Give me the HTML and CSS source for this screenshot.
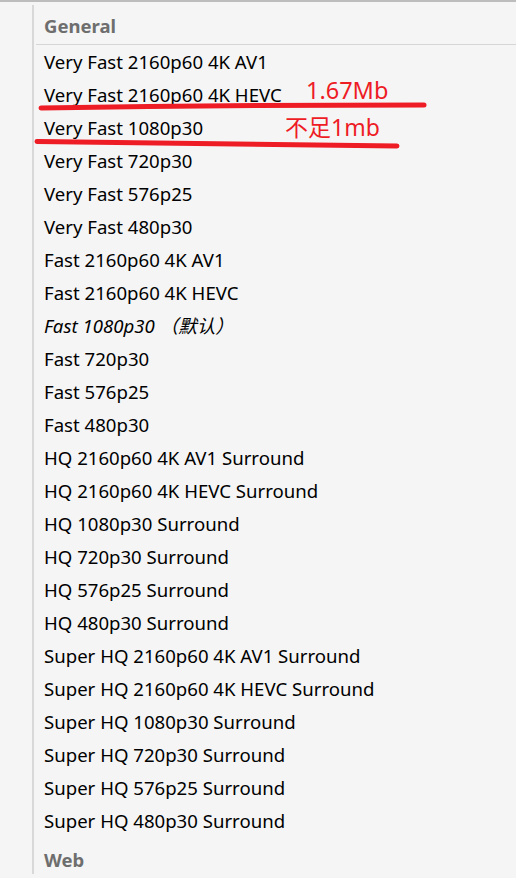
FILE: index.html
```html
<!DOCTYPE html>
<html lang="zh-CN">
<head>
<meta charset="utf-8">
<title>Presets</title>
<link rel="stylesheet" href="styles.css">
</head>
<body>
<div class="topbar"></div>
<div class="frame">
  <div class="gutter"></div>
  <div class="panel">
    <div class="group-head">General</div>
    <ul class="list">
      <li>Very Fast 2160p60 4K AV1</li>
      <li>Very Fast 2160p60 4K HEVC</li>
      <li>Very Fast 1080p30</li>
      <li>Very Fast 720p30</li>
      <li>Very Fast 576p25</li>
      <li>Very Fast 480p30</li>
      <li>Fast 2160p60 4K AV1</li>
      <li>Fast 2160p60 4K HEVC</li>
      <li class="default">Fast 1080p30 （默认）</li>
      <li>Fast 720p30</li>
      <li>Fast 576p25</li>
      <li>Fast 480p30</li>
      <li>HQ 2160p60 4K AV1 Surround</li>
      <li>HQ 2160p60 4K HEVC Surround</li>
      <li>HQ 1080p30 Surround</li>
      <li>HQ 720p30 Surround</li>
      <li>HQ 576p25 Surround</li>
      <li>HQ 480p30 Surround</li>
      <li>Super HQ 2160p60 4K AV1 Surround</li>
      <li>Super HQ 2160p60 4K HEVC Surround</li>
      <li>Super HQ 1080p30 Surround</li>
      <li>Super HQ 720p30 Surround</li>
      <li>Super HQ 576p25 Surround</li>
      <li>Super HQ 480p30 Surround</li>
    </ul>
    <div class="group-head web">Web</div>
  </div>
</div>
<svg class="marks" width="516" height="878" viewBox="0 0 516 878" aria-hidden="true">
  <path d="M41 108 Q 230 105 424 105" />
  <path d="M37 141.5 Q 220 143 397 146" />
</svg>
<span class="note note-a">1.67Mb</span>
<span class="note note-b">不足1mb</span>
</body>
</html>
```
FILE: styles.css
```css
html, body {
  margin: 0;
  padding: 0;
}
body {
  width: 516px;
  height: 878px;
  overflow: hidden;
  background: #f5f5f5;
  font-family: "Noto Sans", "Noto Sans CJK SC", sans-serif;
  color: #000;
  position: relative;
}
.topbar {
  height: 2px;
  background: #bdbdbd;
}
.frame {
  display: flex;
  padding-top: 3px;
}
.gutter {
  width: 32px;
  flex: none;
}
.panel {
  flex: 1;
  border-left: 2px solid #d8d8d8;
  height: 869px;
}
.group-head {
  margin-left: 2px;
  padding-left: 8px;
  font-size: 18.5px;
  font-weight: 700;
  color: #6e6e6e;
  height: 39px;
  line-height: 42px;
  border-bottom: 1px solid #d6d6d6;
}
.group-head.web {
  border-bottom: none;
  line-height: 46px;
}
.list {
  list-style: none;
  margin: 0;
  padding: 0 0 0 10px;
}
.list li {
  height: 33px;
  line-height: 33px;
  font-size: 18.6px;
  white-space: nowrap;
}
.list li.default {
  font-style: italic;
}
.marks {
  position: absolute;
  left: 0;
  top: 0;
  pointer-events: none;
}
.marks path {
  fill: none;
  stroke: #ee1c25;
  stroke-width: 5;
  stroke-linecap: round;
}
.note {
  position: absolute;
  color: #ee1c25;
  font-family: "Noto Sans", "Noto Sans CJK SC", sans-serif;
  font-size: 23.5px;
  line-height: 26px;
  white-space: nowrap;
}
.note-a {
  left: 306px;
  top: 77px;
}
.note-b {
  left: 285px;
  top: 114px;
  font-size: 23px;
}
```
